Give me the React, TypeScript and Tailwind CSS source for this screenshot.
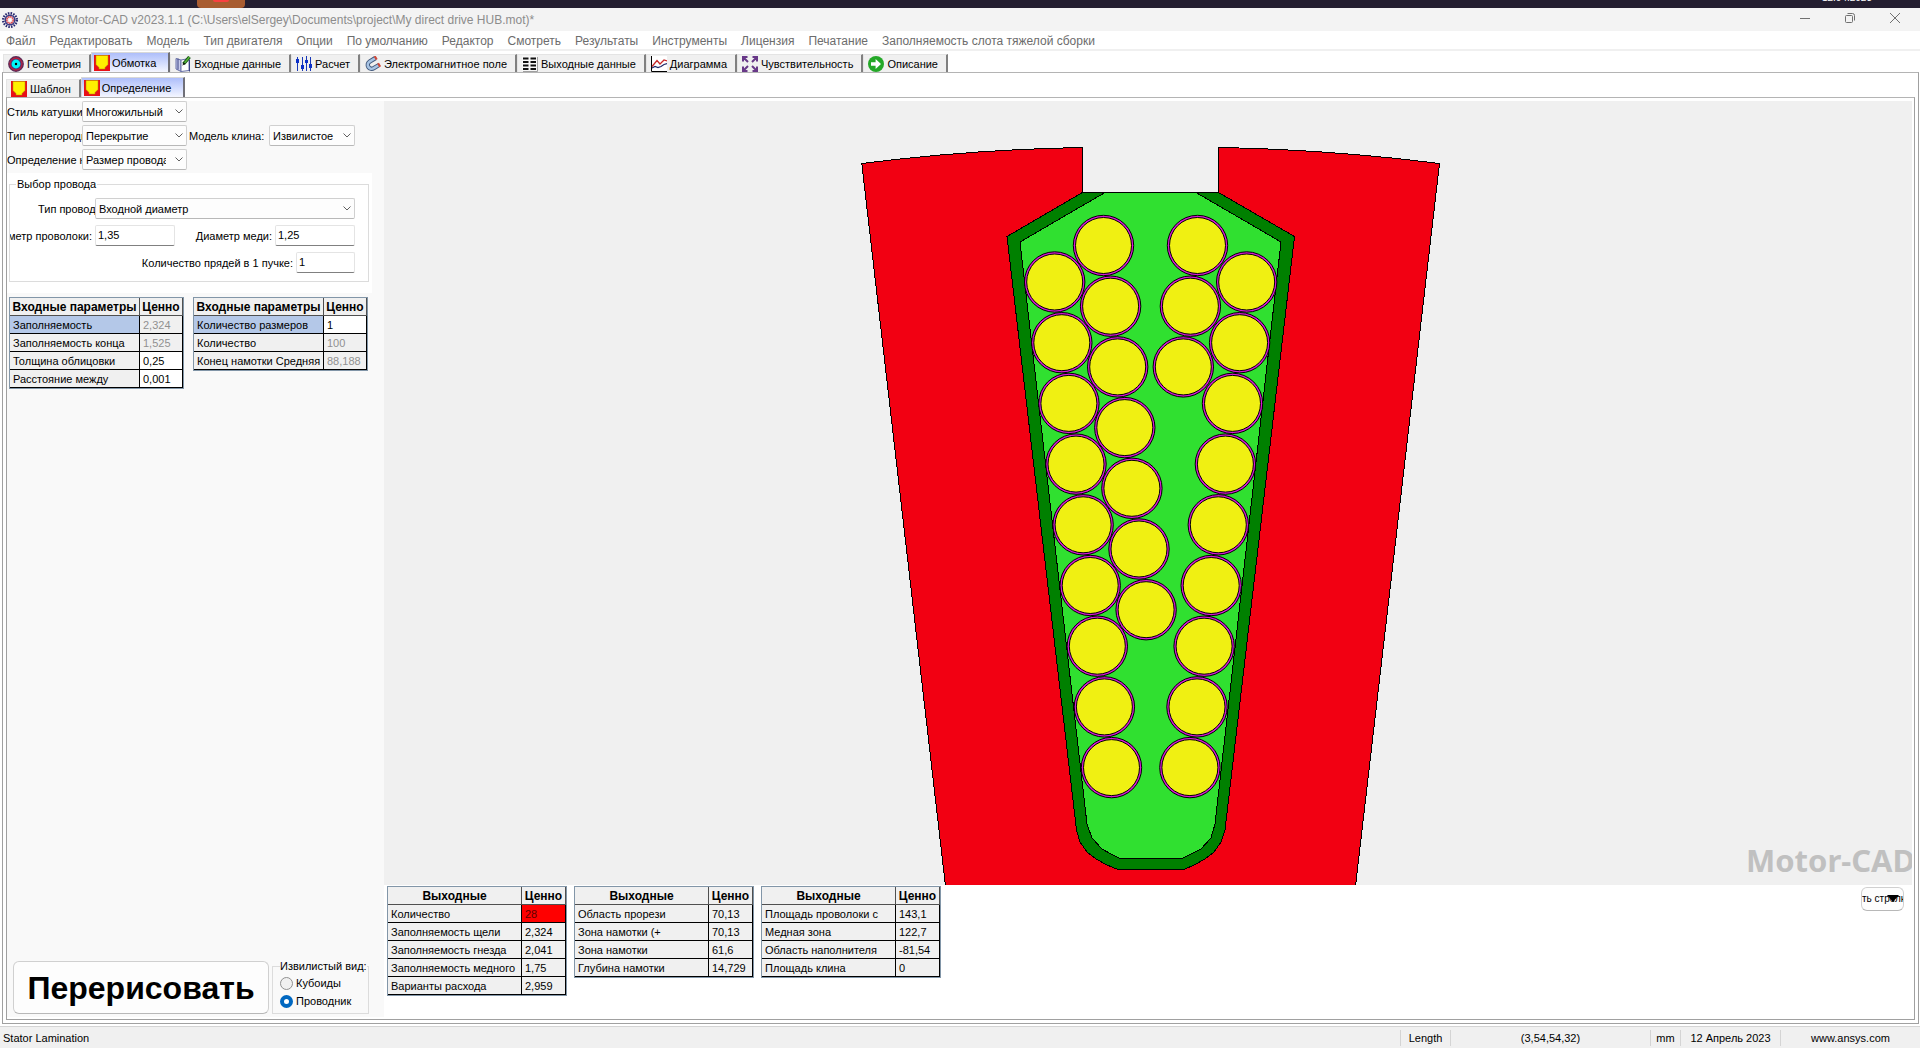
import type { ReactNode } from "react";

const MENU = [
	"Файл",
	"Редактировать",
	"Модель",
	"Тип двигателя",
	"Опции",
	"По умолчанию",
	"Редактор",
	"Смотреть",
	"Результаты",
	"Инструменты",
	"Лицензия",
	"Печатание",
	"Заполняемость слота тяжелой сборки",
];

function LogoIcon() {
	return (
		<svg viewBox="0 0 16 16" className="size-4 shrink-0">
			<circle cx="8" cy="8" r="6.8" fill="none" stroke="#26266e" strokeWidth="2.4" strokeDasharray="1.5 1.2" />
			<circle cx="8" cy="8" r="4.8" fill="#d8cce4" stroke="#3c3c84" strokeWidth="1.4" />
			<circle cx="8" cy="8" r="3.2" fill="#f4e4e8" stroke="#d84848" strokeWidth="1.5" strokeDasharray="1.6 .5" />
			<circle cx="8" cy="8" r="1.4" fill="#ffffff" />
		</svg>
	);
}

function GeometryIcon() {
	return (
		<svg viewBox="0 0 16 16" className="size-4 shrink-0">
			<circle cx="8" cy="8" r="7.2" fill="#d81830" stroke="#5c2c58" strokeWidth="1.4" />
			<circle cx="8" cy="8" r="5" fill="#00f4f8" stroke="#4c3878" strokeWidth="1.2" />
			<circle cx="8" cy="8" r="1.2" fill="#000000" />
		</svg>
	);
}

function SlotIcon() {
	return (
		<svg viewBox="0 0 16 16" className="size-4 shrink-0">
			<path d="M0 0h16v16H0z" fill="#e81018" />
			<path d="M2 .5h12v9l-3 3V14H5v-1.5l-3-3z" fill="#fff000" stroke="#b09000" strokeWidth=".5" />
		</svg>
	);
}

function NotebookIcon() {
	return (
		<svg viewBox="0 0 16 16" className="size-4 shrink-0">
			<path d="M1 2.5 6 4v11.5L1 13z" fill="#c8ccec" stroke="#6870a8" />
			<path d="M6 4 14 2.5v12L6 15.5z" fill="#ffffff" stroke="#6870a8" />
			<path d="M3 2.5v11M14.5 4v11.5" stroke="#384080" />
			<path d="m14.5 1-6 7" stroke="#145014" strokeWidth="3.4" />
			<path d="M14.5 1 9 7.4" stroke="#58b838" strokeWidth="1.5" />
			<path d="M8.8 6.2 7.2 9.8l3-2z" fill="#101010" />
		</svg>
	);
}

function SlidersIcon() {
	return (
		<svg viewBox="0 0 16 16" className="size-4 shrink-0">
			<path d="M1.5 1v14M6.5 1v14M10.5 0v15M14.5 1v14" stroke="#1838b8" strokeWidth="1" />
			<path d="M0 3h3v4H0zM5 9h3v4H5zM9 4h3v3H9zM13 8h3v4h-3z" fill="#0c30c8" />
		</svg>
	);
}

function MagnetIcon() {
	return (
		<svg viewBox="0 0 16 16" className="size-4 shrink-0" fill="none">
			<path d="M10.5 2 4.6 5.6a3.9 3.9 0 0 0 4.2 6.6L14 9" stroke="#40587c" strokeWidth="4.4" />
			<path d="M10.5 2 4.6 5.6a3.9 3.9 0 0 0 4.2 6.6L14 9" stroke="#a8c4e4" strokeWidth="2.6" />
			<path d="m9.8 2.4 1.8-1.1M13.2 9.5 15 8.4" stroke="#d04838" strokeWidth="4" />
		</svg>
	);
}

function ListIcon() {
	return (
		<svg viewBox="0 0 16 16" className="size-4 shrink-0">
			<path d="M0 0h15v15H0z" fill="#f8f8f8" />
			<path d="M15.5 1v14.5H1" fill="none" stroke="#a0a0a0" />
			<path d="M1 2.5h5.5M8.5 2.5H14M1 6h5.5M8.5 6H14M1 9.5h5.5M8.5 9.5H14M1 13h5.5M8.5 13H14" stroke="#101010" strokeWidth="1.8" />
		</svg>
	);
}

function ChartIcon() {
	return (
		<svg viewBox="0 0 16 16" className="size-4 shrink-0" fill="none">
			<path d="M0 0h16v16H0z" fill="#ffffff" />
			<path d="M.5 0v15.5H16" stroke="#000000" />
			<path d="m1 10.5 5-6L9 8l4-4 3 1" stroke="#c82828" strokeWidth="1.3" />
			<path d="m1 12 3-1.5 3 1 3-1 3-2 3-1" stroke="#202868" strokeWidth="1.2" />
		</svg>
	);
}

function ArrowsIcon() {
	return (
		<svg viewBox="0 0 16 16" className="size-4 shrink-0">
			<path
				d="M1 5.5V1h4.5M10.5 1H15v4.500M15 10.5V15h-4.500M5.5 15H1v-4.500M1 1l5 5M15 1l-5 5M15 15l-5-5M1 15l5-5"
				fill="none"
				stroke="#683888"
				strokeWidth="2"
			/>
		</svg>
	);
}

function GoIcon() {
	return (
		<svg viewBox="0 0 16 16" className="size-4 shrink-0">
			<circle cx="8" cy="8" r="8" fill="#24a828" />
			<path d="M3 6.3h4.6V3L13 8l-5.4 5V9.7H3z" fill="#ffffff" />
		</svg>
	);
}

function Tab(props: { icon: ReactNode; active?: boolean; children: ReactNode }) {
	return (
		<button
			type="button"
			role="tab"
			aria-selected={!!props.active}
			className={
				props.active
					? "flex h-5 items-center gap-0.5 border-t border-l border-r-2 border-[#d8d8d8] border-r-[#707078] bg-linear-to-b from-[#aebefa] to-[#f4f6ff] pr-3 pl-0.5 whitespace-nowrap"
					: "flex h-[18px] items-center gap-[3px] border-t border-l border-r-2 border-[#e4e4e4] border-r-[#808080] bg-[#f0f0f0] pr-2 pl-1 whitespace-nowrap"
			}
		>
			{props.icon}
			{props.children}
		</button>
	);
}

function Select(props: { id: string; value: string; className: string }) {
	return (
		<div className={`relative shrink-0 ${props.className}`}>
			<select
				id={props.id}
				className="h-[21px] w-full appearance-none overflow-hidden rounded-xs border border-[#d0d0d0] border-b-[#b8b8b8] bg-[#fdfdfd] pr-5 pl-[3px] text-[11px]"
			>
				<option>{props.value}</option>
			</select>
			<svg viewBox="0 0 8 5" className="pointer-events-none absolute top-2 right-1 h-[5px] w-2" fill="none" stroke="#606060">
				<path d="M.5 .5 4 4 7.5 .5" />
			</svg>
		</div>
	);
}

function NumberField(props: { id: string; value: string; className: string }) {
	return (
		<input
			id={props.id}
			defaultValue={props.value}
			className={`h-[21px] shrink-0 rounded-xs border border-[#e4e4e4] border-b-[#808080] bg-white pb-0.5 pl-0.5 ${props.className}`}
		/>
	);
}

type Row = { name: string; value: string; state?: "edit" | "off" | "error"; selected?: boolean };

const valueStyle = {
	edit: "bg-white",
	off: "bg-[#f0f0f0] text-[#909090]",
	error: "bg-[#ff0000] text-[#600000]",
};

function ParamTable(props: { title: string; rows: Row[]; wide?: boolean }) {
	return (
		<table
			className={`shrink-0 table-fixed border-separate border-spacing-0 border border-[#8296a8] leading-[15px] whitespace-nowrap ${props.wide ? "w-[180px]" : "w-[175px]"}`}
		>
			<thead>
				<tr>
					<th
						className={`h-[18px] overflow-hidden border-r border-b border-[#505050] bg-[#f0f0f0] p-0 pt-0.5 text-xs leading-[15px] ${props.wide ? "w-[134px]" : "w-[130px]"}`}
					>
						{props.title}
					</th>
					<th className="h-[18px] overflow-hidden border-r border-b border-[#505050] bg-[#f0f0f0] p-0 pt-0.5 text-xs leading-[15px]">Ценно</th>
				</tr>
			</thead>
			<tbody>
				{props.rows.map((row) => (
					<tr key={row.name}>
						<td className={`h-[18px] overflow-hidden border-r border-b border-black p-0 pt-0.5 pl-[3px] ${row.selected ? "bg-[#b4c8e8]" : "bg-[#f0f0f0]"}`}>
							{row.name}
						</td>
						<td className={`h-[18px] overflow-hidden border-r border-b border-black p-0 pt-0.5 pl-[3px] ${row.state ? valueStyle[row.state] : "bg-[#f0f0f0]"}`}>
							{row.value}
						</td>
					</tr>
				))}
			</tbody>
		</table>
	);
}

// strand columns: start point, step per strand and number of strands
const COLUMNS = [
	{ x: 1103.5, y: 245.5, dx: 7.1, count: 7 },
	{ x: 1197.5, y: 245.5, dx: -7.1, count: 3 },
	{ x: 1054.7, y: 282, dx: 7.1, count: 9 },
	{ x: 1246.7, y: 282, dx: -7.1, count: 9 },
];
const STEP_Y = 60.7;

function SlotDrawing() {
	return (
		<svg
			viewBox="384 101 1528 784"
			preserveAspectRatio="xMidYMax meet"
			className="min-h-0 w-full flex-1"
			stroke="#000000"
			strokeWidth="1"
			shapeRendering="crispEdges"
		>
			<path
				d="M945.5 886 861.8 163.5Q971 149.5 1082.5 147.5V192.5H1218.5V147.5Q1330 149.5 1439.5 163.5L1355.5 886z"
				fill="#f20012"
			/>
			<path
				d="M1082.5 192.5 1007 236.5 1076.5 830 1080 842 1087 852 1096 859 1107 865 1118 869.5H1184L1194 865 1205 859 1214 852 1221 842 1225 830 1294.5 236.5 1218.5 192.5z"
				fill="#008000"
			/>
			<path
				d="M1105 192.5 1020 242 1087 824 1092 838 1102 849 1111 854 1120 858.5H1182L1191 854 1201 849 1211 838 1215 824 1281 242 1196 192.5z"
				fill="#30e030"
			/>
			<g shapeRendering="geometricPrecision">
				{COLUMNS.map((col) =>
					Array.from({ length: col.count }, (_, i) => (
						<g key={`${col.x}-${i}`}>
							<circle cx={col.x + col.dx * i} cy={col.y + STEP_Y * i} r="30.2" fill="#d818d8" />
							<circle cx={col.x + col.dx * i} cy={col.y + STEP_Y * i} r="28" fill="#f0f012" />
						</g>
					)),
				)}
			</g>
		</svg>
	);
}

function InputPanel() {
	return (
		<div className="flex w-[377px] shrink-0 flex-col bg-[#f9f9f9]">
			<div className="flex flex-col gap-[3px]">
				<div className="flex items-center">
					<label htmlFor="coil-style" className="w-[75px] overflow-hidden whitespace-nowrap">
						Стиль катушки:
					</label>
					<Select id="coil-style" value="Многожильный провод" className="w-[105px]" />
				</div>
				<div className="flex items-center">
					<label htmlFor="divider" className="w-[75px] overflow-hidden whitespace-nowrap">
						Тип перегородки:
					</label>
					<Select id="divider" value="Перекрытие" className="w-[105px]" />
					<label htmlFor="wedge" className="w-[82px] pl-0.5 whitespace-nowrap">
						Модель клина:
					</label>
					<Select id="wedge" value="Извилистое" className="w-[86px]" />
				</div>
				<div className="flex items-center">
					<label htmlFor="definition" className="w-[75px] overflow-hidden whitespace-nowrap">
						Определение намотки:
					</label>
					<Select id="definition" value="Размер провода" className="w-[105px]" />
				</div>
			</div>

			<div className="mt-[3px] mr-3 bg-white pt-1 pr-1 pb-[11px] pl-0.5">
				<fieldset className="flex flex-col gap-1.5 border border-[#dcdcdc] pt-1.5 pr-[13px] pb-2">
					<legend className="ml-1.5 px-px leading-[15px]">Выбор провода</legend>
					<div className="flex items-center">
						<label htmlFor="wire-type" className="w-[85px] overflow-hidden pl-7 whitespace-nowrap">
							Тип провода:
						</label>
						<Select id="wire-type" value="Входной диаметр" className="w-[260px]" />
					</div>
					<div className="flex items-center">
						<label htmlFor="wire-diameter" className="flex w-[85px] justify-end overflow-hidden pr-[3px] whitespace-nowrap">
							Диаметр проволоки:
						</label>
						<NumberField id="wire-diameter" value="1,35" className="w-20" />
						<label htmlFor="copper-diameter" className="flex-1 pr-[3px] text-right whitespace-nowrap">
							Диаметр меди:
						</label>
						<NumberField id="copper-diameter" value="1,25" className="w-20" />
					</div>
					<div className="flex items-center">
						<label htmlFor="strands" className="flex-1 pr-[3px] text-right whitespace-nowrap">
							Количество прядей в 1 пучке:
						</label>
						<NumberField id="strands" value="1" className="w-[59px]" />
					</div>
				</fieldset>
			</div>

			<div className="mt-1 flex items-start gap-[9px] pl-0.5">
				<ParamTable
					title="Входные параметры"
					rows={[
						{ name: "Заполняемость", value: "2,324", state: "off", selected: true },
						{ name: "Заполняемость конца", value: "1,525", state: "off" },
						{ name: "Толщина облицовки", value: "0,25", state: "edit" },
						{ name: "Расстояние между", value: "0,001", state: "edit" },
					]}
				/>
				<ParamTable
					title="Входные параметры"
					rows={[
						{ name: "Количество размеров", value: "1", state: "edit", selected: true },
						{ name: "Количество", value: "100", state: "off" },
						{ name: "Конец намотки Средняя", value: "88,188", state: "off" },
					]}
				/>
			</div>

			<div className="mt-auto flex items-end gap-[3px] pb-[3px] pl-1.5">
				<button
					type="button"
					className="h-[53px] w-64 rounded-md border border-[#d0d0d0] border-b-[#b8b8b8] bg-[#fdfdfd] text-[32px] leading-none font-bold"
				>
					Перерисовать
				</button>
				<fieldset className="w-[97px] border border-[#dcdcdc] pb-[3px] pl-[7px]">
					<legend className="leading-[15px] whitespace-nowrap">Извилистый вид:</legend>
					<label className="flex h-[18px] items-center gap-[3px]">
						<input type="radio" name="view" className="size-[13px] appearance-none rounded-full border border-[#909090] bg-[#f0f0f0]" />
						Кубоиды
					</label>
					<label className="flex h-[18px] items-center gap-[3px]">
						<input
							type="radio"
							name="view"
							defaultChecked
							className="size-[13px] appearance-none rounded-full border-4 border-[#0067c0] bg-white"
						/>
						Проводник
					</label>
				</fieldset>
			</div>
		</div>
	);
}

function OutputPanel() {
	return (
		<div className="flex items-start gap-[7px] pt-px pb-[21px] pl-[3px]">
			<ParamTable
				wide
				title="Выходные"
				rows={[
					{ name: "Количество", value: "28", state: "error" },
					{ name: "Заполняемость щели", value: "2,324" },
					{ name: "Заполняемость гнезда", value: "2,041" },
					{ name: "Заполняемость медного", value: "1,75" },
					{ name: "Варианты расхода", value: "2,959" },
				]}
			/>
			<ParamTable
				wide
				title="Выходные"
				rows={[
					{ name: "Область прорези", value: "70,13" },
					{ name: "Зона намотки (+", value: "70,13" },
					{ name: "Зона намотки", value: "61,6" },
					{ name: "Глубина намотки", value: "14,729" },
				]}
			/>
			<ParamTable
				wide
				title="Выходные"
				rows={[
					{ name: "Площадь проволоки с", value: "143,1" },
					{ name: "Медная зона", value: "122,7" },
					{ name: "Область наполнителя", value: "-81,54" },
					{ name: "Площадь клина", value: "0" },
				]}
			/>
			<button
				type="button"
				className="relative mt-px mr-2 ml-auto flex h-6 w-[43px] items-center overflow-hidden rounded-md border border-[#d0d0d0] border-b-[#b8b8b8] bg-[#fdfdfd] text-[10px] whitespace-nowrap"
			>
				ть стрелк
				<svg viewBox="0 0 12 7" className="absolute top-[7px] right-1 h-[7px] w-3">
					<path d="M0 0h12L6 7z" fill="#000000" />
				</svg>
			</button>
		</div>
	);
}

export default function App() {
	return (
		<div className="flex h-screen flex-col overflow-hidden bg-white font-['Liberation_Sans',sans-serif] text-[11px] leading-4 text-black">
			<div className="flex h-2 shrink-0 justify-between overflow-hidden bg-[#241e30] pr-12 pl-[197px]">
				<div className="flex h-2 w-12 justify-center rounded-b-sm bg-[#a85c30]">
					<div className="h-0.5 w-4 rounded-b-sm bg-[#f84040]" />
				</div>
				<div className="flex h-0.5 items-end text-[10px] leading-[8px] text-white">12.04.2023</div>
			</div>

			<header className="flex h-[23px] shrink-0 items-center gap-1.5 bg-[#f3f3f3] pr-5 pl-0.5 text-xs text-[#8c8c8c]">
				<LogoIcon />
				<h1 className="flex-1 whitespace-nowrap">
					{"ANSYS Motor-CAD v2023.1.1 (C:\\Users\\elSergey\\Documents\\project\\My direct drive HUB.mot)*"}
				</h1>
				<div className="flex items-center gap-[35px] pb-1">
					<button type="button" aria-label="Свернуть">
						<svg viewBox="0 0 10 10" className="size-2.5" fill="none" stroke="#707070">
							<path d="M0 5.5h10" />
						</svg>
					</button>
					<button type="button" aria-label="Развернуть">
						<svg viewBox="0 0 10 10" className="size-2.5" fill="none" stroke="#707070">
							<rect x=".5" y="2.5" width="7" height="7" rx="1" />
							<path d="M2.5 .5h5a2 2 0 0 1 2 2v5" />
						</svg>
					</button>
					<button type="button" aria-label="Закрыть">
						<svg viewBox="0 0 10 10" className="size-2.5" fill="none" stroke="#707070">
							<path d="m0 0 10 10M10 0 0 10" />
						</svg>
					</button>
				</div>
			</header>

			<nav className="flex h-5 shrink-0 items-center gap-3.5 border-b-2 border-[#f0f0f0] pt-0.5 pl-1.5 text-xs text-[#6c6c6c]">
				{MENU.map((item) => (
					<button type="button" key={item} className="whitespace-nowrap">
						{item}
					</button>
				))}
			</nav>

			<div role="tablist" className="flex h-[21px] shrink-0 items-end pl-[3px]">
				<Tab icon={<GeometryIcon />}>Геометрия</Tab>
				<Tab icon={<SlotIcon />} active>
					Обмотка
				</Tab>
				<Tab icon={<NotebookIcon />}>Входные данные</Tab>
				<Tab icon={<SlidersIcon />}>Расчет</Tab>
				<Tab icon={<MagnetIcon />}>Электромагнитное поле</Tab>
				<Tab icon={<ListIcon />}>Выходные данные</Tab>
				<Tab icon={<ChartIcon />}>Диаграмма</Tab>
				<Tab icon={<ArrowsIcon />}>Чувствительность</Tab>
				<Tab icon={<GoIcon />}>Описание</Tab>
			</div>

			<main className="mr-px mb-0.5 ml-0.5 flex min-h-0 flex-1 flex-col border border-[#a0a0a0] border-t-[#b4b4b4] pr-[3px] pb-[3px] pl-[3px]">
				<div role="tablist" className="flex h-6 shrink-0 items-end">
					<Tab icon={<SlotIcon />}>Шаблон</Tab>
					<Tab icon={<SlotIcon />} active>
						Определение
					</Tab>
				</div>
				<div className="flex min-h-0 flex-1 border border-[#a0a0a0] border-t-[#b4b4b4] pt-[3px] pr-0.5 pb-0.5">
					<InputPanel />
					<div className="flex min-w-0 flex-1 flex-col">
						<div className="relative flex min-h-0 flex-1 flex-col overflow-hidden bg-[#f0f0f0]">
							<SlotDrawing />
							<div className="absolute right-0 bottom-[5px] w-[166px] overflow-hidden font-['Noto_Sans',sans-serif] text-[31px] leading-10 font-bold whitespace-nowrap text-[#c0c0c0]">
								Motor-CAD
							</div>
						</div>
						<OutputPanel />
					</div>
				</div>
			</main>

			<footer className="flex h-[22px] shrink-0 items-center border-t border-[#d4d4d4] bg-[#f0f0f0] text-center">
				<div className="flex-1 pl-[3px] text-left">Stator Lamination</div>
				<div className="w-[50px] border-l border-[#d4d4d4]">Length</div>
				<div className="w-[200px] border-l border-[#d4d4d4]">(3,54,54,32)</div>
				<div className="w-[30px] border-l border-[#d4d4d4]">mm</div>
				<div className="w-[100px] border-l border-[#d4d4d4]">12 Апрель 2023</div>
				<div className="w-[140px] border-l border-[#d4d4d4]">
					<a href="#ansys">www.ansys.com</a>
				</div>
			</footer>
		</div>
	);
}
